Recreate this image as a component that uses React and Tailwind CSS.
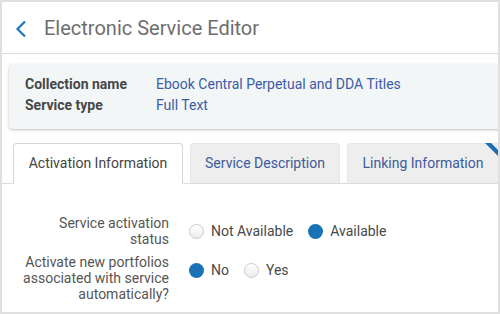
import React from 'react';

const Radio = ({ checked, label }) => (
  <label className="flex items-center gap-[7px]">
    {checked ? (
      <span className="w-[15px] h-[15px] rounded-full bg-[#1a72b6]" />
    ) : (
      <span className="w-[15px] h-[15px] rounded-full border border-[#cbcbcb] bg-gradient-to-b from-white to-[#ececec] shadow-[inset_0_1px_1px_rgba(255,255,255,0.9)]" />
    )}
    <span className="text-[14px] text-[#4a4a4a]">{label}</span>
  </label>
);

export default function App() {
  const tabs = [
    { id: 'activation', label: 'Activation Information', w: 'w-[170px]' },
    { id: 'description', label: 'Service Description', w: 'w-[150px]' },
    { id: 'linking', label: 'Linking Information', w: 'w-[160px]' },
  ];

  return (
    <div className="w-[500px] h-[314px] border-2 border-[#e0e0e0] bg-white overflow-hidden font-['Roboto',sans-serif]">
      <div className="h-[52px] flex items-center border-b border-[#dcdcdc]">
        <svg className="ml-[12px] mt-[2px]" width="14" height="18" viewBox="0 0 14 18">
          <polyline points="11,1.5 3.5,9 11,16.5" fill="none" stroke="#1f76b6" strokeWidth="2.2" />
        </svg>
        <h1 className="ml-[16px] text-[20px] text-[#6e6e6e] leading-none">Electronic Service Editor</h1>
      </div>

      <div className="ml-[7px] -mr-[10px] mt-[10px] pl-[16px] pt-[10px] pb-[13px] bg-[#f3f6f7] rounded-[4px] shadow-[0_1px_3px_rgba(0,0,0,0.25)] text-[14px] leading-[21px]">
        <div className="flex">
          <span className="w-[131px] font-bold text-[#474747]">Collection name</span>
          <span className="text-[#3c5ca5]">Ebook Central Perpetual and DDA Titles</span>
        </div>
        <div className="flex">
          <span className="w-[131px] font-bold text-[#474747]">Service type</span>
          <span className="text-[#3c5ca5]">Full Text</span>
        </div>
      </div>

      <div className="mt-[13px] flex items-end gap-[7px] pl-[11px] border-b border-[#dcdcdc] h-[42px]">
        {tabs.map((t, i) => {
          const active = i === 0;
          return (
            <div
              key={t.id}
              className={`relative ${t.w} h-[41px] shrink-0 flex items-center justify-center text-[14px] rounded-t-[4px] -mb-px ${
                active
                  ? 'bg-white border border-[#d6d6d6] border-b-white text-[#444]'
                  : 'bg-[#eeeeee] border border-[#e6e6e6] border-b-[#dcdcdc] text-[#3d5a9c]'
              }`}
            >
              <span className={i === 2 ? 'self-center -translate-x-[4px]' : ''}>{t.label}</span>
              {i === 2 && (
                <svg className="absolute top-[-1px] left-[137px]" width="16" height="16" viewBox="0 0 16 16">
                  <polygon points="0,0 6,0 16,10 16,16" fill="#1d6fb3" />
                </svg>
              )}
            </div>
          );
        })}
      </div>

      <div className="mt-[31px] flex flex-col gap-[7px] text-[14px] leading-[16px]">
        <div className="flex items-center">
          <div className="w-[167px] text-right text-[#555]">Service activation<br />status</div>
          <div className="ml-[20px] flex items-center gap-[15px]">
            <Radio checked={false} label="Not Available" />
            <Radio checked label="Available" />
          </div>
        </div>
        <div className="flex items-start">
          <div className="w-[167px] text-right text-[#555]">
            Activate new portfolios<br />associated with service<br />automatically?
          </div>
          <div className="ml-[20px] mt-[8px] flex items-center gap-[15px]">
            <Radio checked label="No" />
            <Radio checked={false} label="Yes" />
          </div>
        </div>
      </div>
    </div>
  );
}
